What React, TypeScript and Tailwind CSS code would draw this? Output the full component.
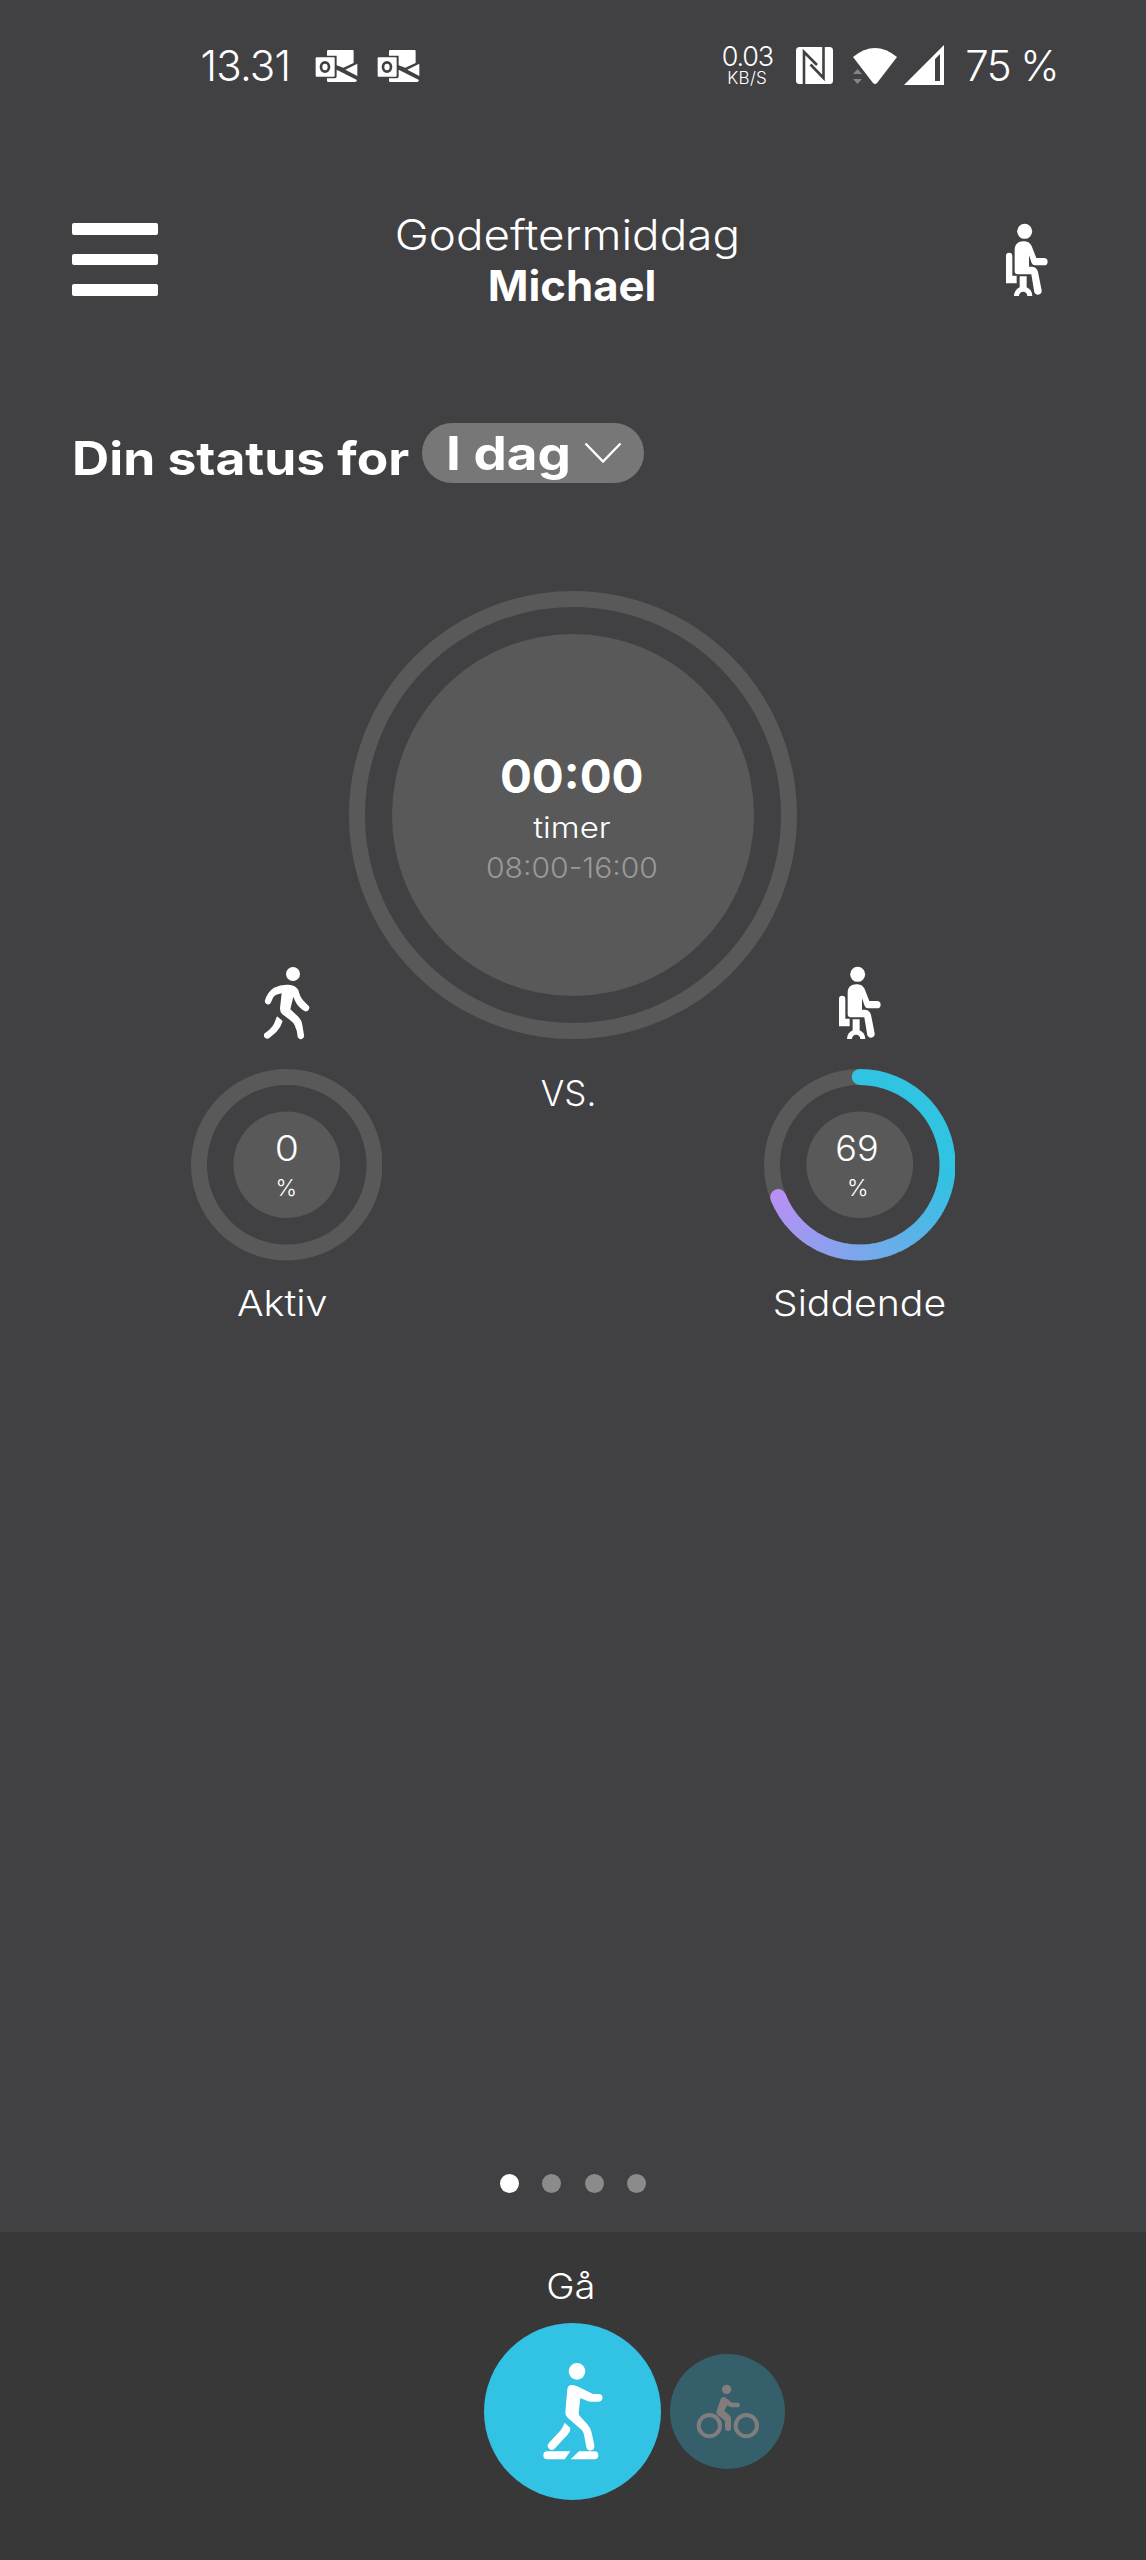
import React from "react";

function SeatedIcon({ className }: { className?: string }) {
  return (
    <svg viewBox="76 38 130 222" width="43.3" height="74" fill="white" className={className}>
      <circle cx="135" cy="63" r="22.5" />
      <path d="M105 119 C105 101 116 93 131 93 C146 93 153 99 158 112 L170 143 H193 A11 11 0 0 1 193 165 H166 Q159 165 156 158 L148 134 V169 H158 Q171 170 175 184 L186 240 A11.5 11.5 0 0 1 164 246 L155 192 H115 Q105 192 105 182 Z" />
      <path d="M79 137 A9.5 9.5 0 0 1 98 137 V196 H111 V219 H79 Z" />
      <path d="M120 198 H141 V231 Q157 238 158 257 H143 A12.500 12.500 0 0 0 118 257 H103 Q104 238 120 231 Z" />
    </svg>
  );
}

function WalkIcon() {
  return (
    <svg viewBox="250 48 140 222" width="46.7" height="74" fill="white">
      <circle cx="340" cy="72" r="21" />
      <path d="M255 154 Q262 126 283 113 Q303 103 326 104 Q348 105 356 120 Q361 141 370 151 L384 165 A10 10 0 0 1 373 182 Q354 170 346 152 L341 140 L332 178 L356 200 Q366 210 368 225 L373 255 A10 10 0 0 1 354 261 Q352 240 345 226 Q342 218 330 209 L308 193 Q300 186 301 173 L306 130 Q287 133 280 143 L274 157 A9.8 9.8 0 0 1 255 154 Z" />
      <path d="M292 199 L309 213 Q304 231 290 246 L269 264 A10 10 0 0 1 255 250 Q276 235 283 221 Z" />
    </svg>
  );
}

function TreadmillIcon() {
  return (
    <svg viewBox="216 188 186 296" width="62" height="98.7" fill="white">
      <circle cx="321" cy="216" r="25" />
      <path d="M292 270 Q293 257 306 257 Q315 257 325 262 L369 284 H386 A11.5 11.5 0 0 1 386 307 H362 Q354 307 347 303 L331 296 L326 340 Q326 347 330 351 L352 375 Q362 386 365 400 L373 438 A12 12 0 0 1 349 444 L342 406 Q341 398 335 392 L293 355 Q285 348 286 338 Z" />
      <path d="M284 370 L301 386 Q302 396 294 405 L255 447 A12 12 0 0 1 236 432 L272 393 Q279 383 284 370 Z" />
      <path d="M232 456 H301 L284 480 H232 A12 12 0 0 1 232 456 Z" />
      <path d="M327 456 H373 A12 12 0 0 1 373 480 H302 Z" />
    </svg>
  );
}

function BikeIcon() {
  return (
    <svg viewBox="678 252 192 166" width="64" height="55.3" fill="#827d7c">
      <circle cx="718" cy="377" r="32" fill="none" stroke="#827d7c" strokeWidth="12" />
      <circle cx="829" cy="377" r="32" fill="none" stroke="#827d7c" strokeWidth="12" />
      <circle cx="770" cy="268" r="14" />
      <path d="M752 297 Q757 288 767 293 L786 308 H803 A7 7 0 0 1 803 322 H786 Q781 322 777 319 L772 316 L763 333 L776 343 Q783 349 783 359 V384 A9 9 0 0 1 765 384 V362 L743 345 Q737 339 741 330 Z" />
    </svg>
  );
}

function MailIcon() {
  return (
    <svg viewBox="404 53 130 102" width="43.3" height="34">
      <path fill="white" d="M444 56 H517 Q520 56 520 59 V95 L489 109 L469 102 V73 H440 V60 Q440 56 444 56 Z" />
      <path fill="white" d="M531 97 V134 L495 115 Z" />
      <path fill="white" d="M440 141 H464 Q469 141 469 135 V115 L530 146 Q529 152 524 152 H444 Q440 152 440 148 Z" />
      <rect x="406" y="78" width="57" height="58" rx="3" fill="white" />
      <ellipse cx="434" cy="107" rx="12" ry="14" fill="none" stroke="#414043" strokeWidth="8" />
    </svg>
  );
}

function polar(deg: number, r: number, c: number) {
  const a = ((deg - 90) * Math.PI) / 180;
  return [c + r * Math.cos(a), c + r * Math.sin(a)];
}

function arc(from: number, to: number) {
  const [x1, y1] = polar(from, 88, 96);
  const [x2, y2] = polar(to, 88, 96);
  return `M${x1} ${y1} A88 88 0 ${to - from > 180 ? 1 : 0} 1 ${x2} ${y2}`;
}

const sweepStart = 95;
const sweepSteps = 77;

function mix(t: number) {
  const a = [48, 195, 226];
  const b = [184, 144, 245];
  return `rgb(${a.map((v, i) => Math.round(v + (b[i] - v) * t)).join(",")})`;
}

function Ring({ percent, children }: { percent: number; children: React.ReactNode }) {
  const end = percent * 3.6;
  return (
    <div className="relative size-[191.500px]">
      <svg viewBox="0 0 192 192" className="absolute inset-0 size-full">
        <circle cx="96" cy="96" r="88" fill="none" stroke="#595959" strokeWidth="16" />
        <circle cx="96" cy="96" r="53.5" fill="#595959" />
        {percent > 0 && (
          <g fill="none" strokeWidth="16">
            <path d={arc(end - 0.5, end)} stroke={mix(1)} strokeLinecap="round" />
            <path d={arc(0, sweepStart + 0.5)} stroke={mix(0)} strokeLinecap="round" />
            {Array.from({ length: sweepSteps }, (_, i) => {
              const step = (end - sweepStart) / sweepSteps;
              const a = sweepStart + i * step;
              return <path key={i} d={arc(a, Math.min(end, a + step + 0.5))} stroke={mix(i / sweepSteps)} />;
            })}
          </g>
        )}
      </svg>
      <div className="relative flex flex-col items-center pt-[59px]">{children}</div>
    </div>
  );
}

export default function App() {
  return (
    <div className="flex h-[2560px] w-[1146px] flex-col overflow-hidden bg-[#414043] font-['Inter',sans-serif] font-[350] whitespace-nowrap text-white">
      <div className="flex h-[131px] shrink-0 items-center pr-[88px] pl-[200.500px]">
        <span className="w-[114px] text-[42px] font-light tracking-[-0.8px]">13.31</span>
        <div className="flex gap-[19.500px]">
          <MailIcon />
          <MailIcon />
        </div>
        <div className="mr-[23px] ml-auto flex w-[52px] flex-col items-center">
          <span className="text-[27px] leading-[20px] font-light tracking-[-1.2px]">0.03</span>
          <span className="mt-[4px] text-[17px] leading-[14px] tracking-[0.3px]">KB/S</span>
        </div>
        <svg viewBox="0 0 37 37" width="37" height="37" className="mr-[19px]">
          <rect width="37" height="37" rx="3.5" fill="white" />
          <path fill="none" stroke="#414043" strokeWidth="2.6" d="M8 38 V5 L21 18 M27.500 -1 V31 L14.500 17.500" />
        </svg>
        <svg viewBox="0 0 46 40" width="46" height="40" className="mr-[6px]">
          <path fill="white" d="M1 11 Q23 -7 45 11 L25 37 Q23 39 21 37 Z" />
          <path fill="#858486" d="M1 28 L5.500 23 L10 28 Z M1 33 L5.500 38 L10 33 Z" />
        </svg>
        <svg viewBox="0 0 40 40" width="40" height="40" className="mr-[21px] -mt-[2px]">
          <path fill="white" fillRule="evenodd" d="M0 40 L40 0 V40 Z M31 14 V36 H36 V9 Z" />
        </svg>
        <span className="text-[42px] font-light tracking-[-1.6px]">75 %</span>
      </div>

      <header className="mt-[78px] flex h-[101px] shrink-0 items-start pr-[98px] pl-[71.500px]">
        <div className="mt-[14px] flex w-[86px] flex-col gap-[19px]">
          <div className="h-[11.5px] rounded-[2px] bg-white" />
          <div className="h-[11.5px] rounded-[2px] bg-white" />
          <div className="h-[11.5px] rounded-[2px] bg-white" />
        </div>
        <div className="mr-[27px] flex flex-1 flex-col items-center text-[42px] leading-[51px]">
          <div className="scale-x-[1.09]">Godeftermiddag</div>
          <div className="ml-[9px] scale-x-[1.04] font-bold">Michael</div>
        </div>
        <SeatedIcon className="mt-[14px]" />
      </header>

      <div className="mt-[113px] flex h-[60px] shrink-0 items-center pl-[72px] text-[46px] leading-[60px] font-bold">
        <span className="mt-[10px] w-[350px] origin-left scale-x-[1.12]">Din status for</span>
        <div className="flex h-[60px] w-[222px] items-center rounded-full bg-[#777777] pl-[24px]">
          <span className="w-[138px] origin-left scale-x-[1.15]">I dag</span>
          <svg viewBox="0 0 38 22" width="38" height="22" fill="none" stroke="white" strokeWidth="2.4">
            <path d="M1.500 1.500 L19 19.500 L36.500 1.500" />
          </svg>
        </div>
      </div>

      <div className="mt-[108px] flex size-[448px] shrink-0 items-center justify-center self-center rounded-full border-[16px] border-[#595959]">
        <div className="flex size-[362px] flex-col items-center rounded-full bg-[#595959] pt-[116px]">
          <div className="-ml-[3px] scale-x-[1.03] text-[46px] leading-[52px] font-bold">00:00</div>
          <div className="-ml-[2px] mt-[6px] scale-x-[1.14] text-[29px] leading-[40px]">timer</div>
          <div className="-ml-[2px] scale-x-[1.075] text-[28px] leading-[40px] text-[#999999]">08:00-16:00</div>
        </div>
      </div>

      <div className="-mt-[73px] grid shrink-0 grid-cols-3 px-[143px]">
        <div className="flex flex-col items-center">
          <WalkIcon />
          <div className="mt-[29px]">
            <Ring percent={0}>
              <div className="scale-x-[1.12] text-[35px] leading-[40px]">0</div>
              <div className="mt-[5px] text-[23px] leading-[30px]">%</div>
            </Ring>
          </div>
          <div className="mt-[22px] mr-[8px] scale-x-[1.1] text-[36px] leading-[40px]">Aktiv</div>
        </div>
        <div className="pt-[107px] pr-[9px] text-center text-[35px] leading-[40px]">VS.</div>
        <div className="flex flex-col items-center">
          <SeatedIcon />
          <div className="mt-[29px]">
            <Ring percent={69}>
              <div className="mr-[5px] scale-x-[1.03] text-[35px] leading-[40px]">69</div>
              <div className="mt-[5px] mr-[4px] text-[23px] leading-[30px]">%</div>
            </Ring>
          </div>
          <div className="mt-[22px] scale-x-[1.09] text-[36px] leading-[40px]">Siddende</div>
        </div>
      </div>

      <div className="mt-auto mb-[39px] flex shrink-0 justify-center gap-[23.300px]">
        <div className="size-[19px] rounded-full bg-white" />
        <div className="size-[19px] rounded-full bg-[#8b8b8c]" />
        <div className="size-[19px] rounded-full bg-[#8b8b8c]" />
        <div className="size-[19px] rounded-full bg-[#8b8b8c]" />
      </div>

      <footer className="grid h-[328px] shrink-0 grid-cols-[484px_177px_1fr] grid-rows-[91px_177px] bg-[#383838]">
        <div className="col-start-2 scale-x-[1.09] pt-[34px] pr-[3px] text-center text-[35px] leading-[40px]">Gå</div>
        <div className="col-start-2 row-start-2 flex items-center justify-center rounded-full bg-[#32c2e3]">
          <TreadmillIcon />
        </div>
        <div className="col-start-3 row-start-2 ml-[9px] flex size-[115px] items-center justify-center self-center rounded-full bg-[#35606b]">
          <BikeIcon />
        </div>
      </footer>
    </div>
  );
}
